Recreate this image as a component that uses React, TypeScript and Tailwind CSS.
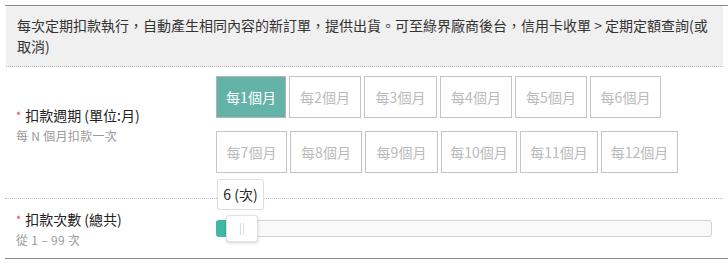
import { useState } from "react";

const font = { fontFamily: '"Noto Sans CJK TC", "Noto Sans", sans-serif' };

// button widths measured per label
const periods = [
  { n: 1, w: "w-[70px]" },
  { n: 2, w: "w-[72px]" },
  { n: 3, w: "w-[73px]" },
  { n: 4, w: "w-[72px]" },
  { n: 5, w: "w-[72px]" },
  { n: 6, w: "w-[71px]" },
  { n: 7, w: "w-[71px]" },
  { n: 8, w: "w-[72px]" },
  { n: 9, w: "w-[73px]" },
  { n: 10, w: "w-[76px]" },
  { n: 11, w: "w-[78px]" },
  { n: 12, w: "w-[77px]" },
];

function FieldLabel({ title, hint }: { title: string; hint: string }) {
  return (
    <div className="w-[211px] shrink-0 pl-[11px]">
      <div className="flex items-center text-[14px] leading-[20px] text-[#222]">
        <span className="mr-[4px] text-[11px] text-[#e0464e]">*</span>
        {title}
      </div>
      <div className="mt-[2px] text-[12px] leading-[18px] tracking-[0.3px] text-[#999]">{hint}</div>
    </div>
  );
}

export default function App() {
  const [period, setPeriod] = useState(1);
  const times = 6;

  return (
    <div className="min-h-[266px] bg-white pl-[5px] pt-[5px]" style={font}>
      <div className="border-y border-[#8a8a8a]">
        <div className="ml-[1px] mr-[5px] border-b border-dotted border-[#bbb] bg-[#f0f0f0] px-[11px] py-[9px] text-[14px] leading-[21px] text-[#333]">
          每次定期扣款執行，自動產生相同內容的新訂單，提供出貨。可至綠界廠商後台，信用卡收單 &gt; 定期定額查詢(或取消)
        </div>

        <div className="mr-[5px] flex items-center border-b border-dotted border-[#bbb] pb-[25px] pt-[9px]">
          <FieldLabel title="扣款週期 (單位:月)" hint="每 N 個月扣款一次" />
          <div className="flex flex-1 flex-wrap gap-x-[3px] gap-y-[13px]">
            {periods.map(({ n, w }) => (
              <button
                key={n}
                onClick={() => setPeriod(n)}
                className={
                  n === period
                    ? `${w} h-[42px] border border-[#b5b5b5] bg-[#63b3a9] text-[14px] text-white`
                    : `${w} h-[42px] border border-[#c4c4c4] bg-white text-[14px] text-[#bbb]`
                }
              >
                每{n}個月
              </button>
            ))}
          </div>
        </div>

        <div className="mr-[5px] flex h-[59px] items-center">
          <FieldLabel title="扣款次數 (總共)" hint="從 1 – 99 次" />
          <div className="relative mr-[11px] h-[17px] flex-1 rounded-[3px] border border-[#d3d3d3] bg-[#f9f9f9]">
            <div className="absolute inset-y-[-1px] left-[-1px] w-[16px] rounded-l-[3px] bg-[#3fb8a7]" />
            <div className="absolute left-[9px] top-[-6px] flex h-[27px] w-[32px] items-center justify-center gap-[2px] rounded-[3px] border border-[#e2e2e2] bg-white shadow-[0_1px_3px_rgba(0,0,0,0.18)]">
              <span className="h-[12px] w-px bg-[#ddd]" />
              <span className="h-[12px] w-px bg-[#ddd]" />
            </div>
            <div className="absolute left-[0px] top-[-42px] flex h-[31px] w-[47px] items-center justify-center rounded-[3px] border border-[#ddd] bg-white text-[14px] text-[#222]">
              {times} (次)
            </div>
          </div>
        </div>
      </div>
    </div>
  );
}
